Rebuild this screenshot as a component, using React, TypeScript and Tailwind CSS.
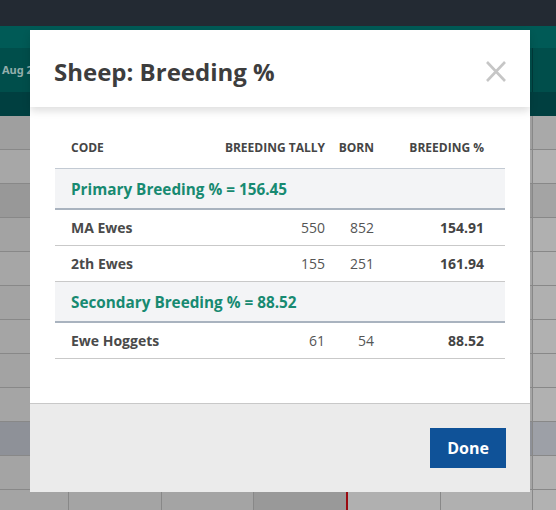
import React from "react";

const rowBgs = [
  "bg-[#9f9f9f]",
  "bg-[#a7a7a7]",
  "bg-[#989898]",
  "bg-[#a3a3a3]",
  "bg-[#a6a6a6]",
  "bg-[#a3a3a3]",
  "bg-[#a5a5a5]",
  "bg-[#a3a3a3]",
  "bg-[#a5a5a5]",
  "bg-[#8e9198]",
  "bg-[#a4a4a4]",
];

const rightBgs = [
  "bg-[#a9a9a9]",
  "bg-[#b1b1b1]",
  "bg-[#a4a4a4]",
  "bg-[#b0b0b0]",
  "bg-[#b1b1b1]",
  "bg-[#b0b0b0]",
  "bg-[#b1b1b1]",
  "bg-[#b0b0b0]",
  "bg-[#b1b1b1]",
  "bg-[#9da0a7]",
  "bg-[#b1b1b1]",
];

function Background() {
  return (
    <div className="flex flex-col w-[556px] h-[510px] overflow-hidden">
      <div className="h-[26px] bg-[#232a33]" />
      <div className="h-[22px] bg-[#005a56]" />
      <div className="h-[44px] bg-[#004e4b] flex">
        <div className="w-[532px] flex items-center pl-[2px] text-[11px] font-bold text-[#93aeac]">Aug 2</div>
        <div className="flex-1 border-l border-[#003a3a]" />
      </div>
      <div className="h-[24px] bg-[#003f40]" />
      {rowBgs.map((bg, i) => (
        <div key={i} className="h-[34px] flex border-b border-[#888888]">
          <div className={`w-[532px] ${bg}`} />
          <div className={`flex-1 border-l border-[#888888] ${rightBgs[i]}`} />
        </div>
      ))}
      <div className="flex-1 flex bg-[#a4a4a4]">
        <div className="w-[68px]" />
        <div className="w-[93px] border-l border-[#888888]" />
        <div className="w-[92px] border-l border-[#888888]" />
        <div className="w-[93px] border-l border-[#888888] bg-[#999999]" />
        <div className="w-[94px] border-l-2 border-[#9b0a10] bg-[#b0b0b0]" />
        <div className="w-[92px] border-l border-[#888888] bg-[#b0b0b0]" />
        <div className="flex-1 border-l border-[#888888] bg-[#b2b2b2]" />
      </div>
    </div>
  );
}

function GroupRow({ label }: { label: string }) {
  return (
    <div className="h-[41px] bg-[#f3f4f6] border-b-2 border-[#a9b3bf] flex items-center pl-4 pt-[1px] text-[15.3px] font-bold text-[#178a71]">
      {label}
    </div>
  );
}

function DataRow({ code, tally, born, pct }: { code: string; tally: string; born: string; pct: string }) {
  return (
    <div className="h-[36px] border-b border-[#c9c9c9] grid grid-cols-[minmax(0,1fr)_120px_49px_110px] items-center pl-4 pr-[21px] text-[14px]">
      <div className="font-bold text-[#4a4a4a]">{code}</div>
      <div className="text-right text-[#555555]">{tally}</div>
      <div className="text-right text-[#555555]">{born}</div>
      <div className="text-right font-bold text-[#444444]">{pct}</div>
    </div>
  );
}

function Modal() {
  return (
    <div className="absolute left-[30px] top-[30px] w-[500px] h-[462px] bg-white flex flex-col" style={{ fontFamily: '"Open Sans", "Noto Sans", sans-serif' }}>
      <div className="relative z-10 h-[77px] shrink-0 bg-white flex items-center justify-between pl-6 pr-6 pt-[6px] shadow-[0_4px_8px_rgba(0,0,0,0.13)]">
        <div className="text-[24px] font-bold text-[#3d3d3d] leading-normal">Sheep: Breeding %</div>
        <svg width="20" height="21" viewBox="0 0 20 21">
          <path d="M1 1 L19 20 M19 1 L1 20" stroke="#c6c6c6" strokeWidth="2.6" fill="none" />
        </svg>
      </div>
      <div className="flex-1 px-[25px] pt-[21px]">
        <div className="h-[41px] border-b border-[#c3cad3] grid grid-cols-[minmax(0,1fr)_120px_49px_110px] items-center pl-4 pr-[21px] text-[12px] font-bold text-[#454545] uppercase">
          <div>Code</div>
          <div className="text-right whitespace-nowrap">Breeding Tally</div>
          <div className="text-right">Born</div>
          <div className="text-right">Breeding %</div>
        </div>
        <GroupRow label="Primary Breeding % = 156.45" />
        <DataRow code="MA Ewes" tally="550" born="852" pct="154.91" />
        <DataRow code="2th Ewes" tally="155" born="251" pct="161.94" />
        <GroupRow label="Secondary Breeding % = 88.52" />
        <DataRow code="Ewe Hoggets" tally="61" born="54" pct="88.52" />
      </div>
      <div className="h-[89px] shrink-0 border-t border-[#c8c8c8] bg-[#ebebeb] flex items-center justify-end pr-6">
        <button className="w-[76px] h-[40px] bg-[#0f5298] text-white text-[16px] font-bold">Done</button>
      </div>
    </div>
  );
}

export default function App() {
  return (
    <div className="relative w-[556px] h-[510px] overflow-hidden">
      <Background />
      <Modal />
    </div>
  );
}
